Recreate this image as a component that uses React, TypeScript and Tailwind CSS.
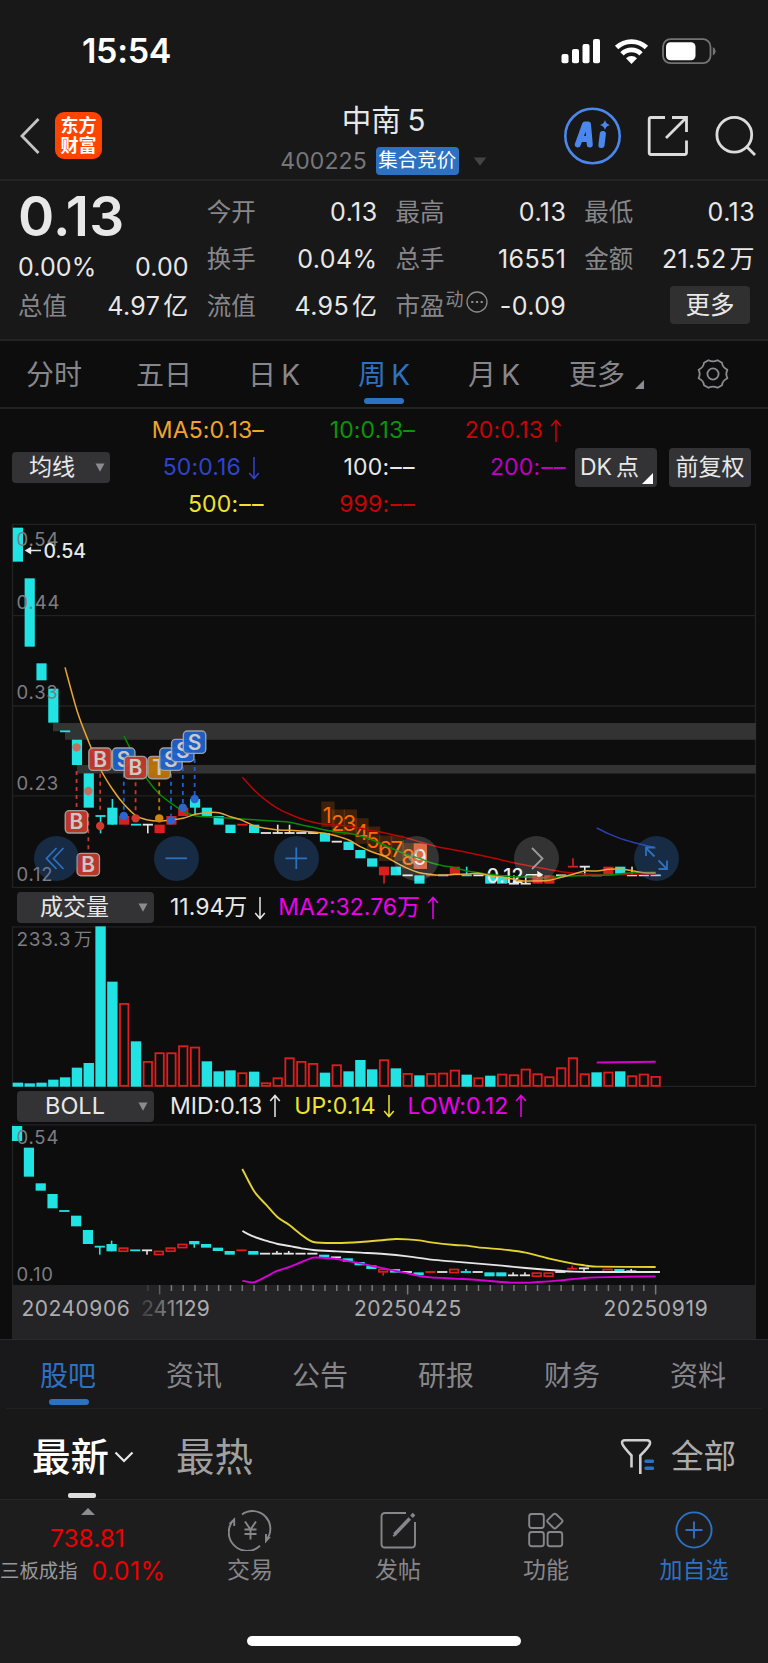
import React from "react";

type Kind = "c" | "r" | "w";
type Candle = [top: number, bottom: number, kind: Kind, wickTop?: number, wickBottom?: number];

const COLORS: Record<Kind, string> = { c: "#22e3e3", r: "#dc1e1e", w: "#e4e4e4" };
const STEP = 11.81;
const X0 = 17.9;
const cx = (i: number) => X0 + i * STEP;

/* Values are in thirds of a pixel, measured from the top of each panel. */
const PRICE: Candle[] = [
  [38, 140, "c"], [190, 395, "c"], [445, 496, "c"], [521, 623, "c"], [649, 649, "c"], [674, 750, "c"],
  [775, 878, "c"], [903, 903, "c", 903, 955], [878, 929, "c", 852, 929], [903, 929, "r"], [929, 929, "c"],
  [929, 929, "w", 929, 955], [929, 954, "r"], [903, 929, "r"], [878, 903, "r"], [852, 878, "c", 852, 903],
  [878, 903, "c"], [903, 929, "c"], [929, 954, "c"], [929, 929, "r"], [929, 954, "c"], [954, 954, "w"],
  [954, 954, "w", 929, 954], [954, 954, "w", 929, 954], [954, 954, "w"], [954, 954, "w"], [954, 980, "c"],
  [980, 980, "w"], [980, 1005, "c"], [1005, 1030, "c"], [1030, 1055, "c"], [1055, 1081, "r", 1055, 1106],
  [1055, 1081, "c"], [1081, 1081, "w"], [1081, 1106, "c"], [1081, 1081, "r"], [1081, 1081, "w"],
  [1055, 1081, "r"], [1081, 1081, "c", 1055, 1081], [1081, 1081, "w"], [1081, 1106, "c"], [1081, 1106, "c"],
  [1106, 1106, "w", 1081, 1106], [1106, 1106, "w", 1081, 1106], [1081, 1106, "r"], [1081, 1106, "r"],
  [1081, 1081, "w"], [1055, 1055, "r", 1030, 1055], [1055, 1055, "w", 1055, 1081], [1081, 1081, "w"],
  [1055, 1081, "r"], [1055, 1076, "c"], [1081, 1081, "w", 1055, 1081], [1081, 1081, "w"], [1081, 1081, "w"],
];

const BOLL: Candle[] = [
  [108, 153, "c"], [173, 260, "c"], [280, 302, "c"], [312, 355, "c"], [363, 363, "c"], [377, 409, "c"],
  [420, 462, "c"], [470, 470, "c", 470, 494], [462, 484, "c", 452, 484], [472, 486, "r"], [481, 481, "c"],
  [481, 481, "w", 481, 494], [482, 496, "r"], [472, 486, "r"], [461, 475, "r"], [453, 463, "c", 453, 473],
  [462, 473, "c"], [473, 483, "c"], [483, 494, "c"], [481, 481, "r"], [483, 494, "c"], [491, 491, "w"],
  [491, 491, "w", 483, 491], [491, 491, "w", 483, 491], [491, 491, "w"], [491, 491, "w"], [494, 503, "c"],
  [502, 502, "w"], [505, 515, "c"], [516, 526, "c"], [526, 537, "c"], [536, 548, "r", 548, 557],
  [537, 548, "c"], [546, 546, "w"], [547, 556, "c"], [546, 546, "r"], [546, 546, "w"], [536, 550, "r"],
  [546, 546, "c", 537, 546], [546, 546, "w"], [547, 559, "c"], [547, 559, "c"], [556, 556, "w", 547, 556],
  [556, 556, "w", 547, 556], [547, 561, "r"], [547, 561, "r"], [546, 546, "w"], [536, 536, "r", 527, 536],
  [535, 535, "w", 535, 547], [546, 546, "w"], [536, 549, "r"], [537, 546, "c"], [544, 544, "w", 537, 544],
  [546, 546, "w"], [546, 546, "w"],
];

const VOLUME: [number, Kind][] = [
  [593, "c"], [595, "c"], [593, "c"], [584, "c"], [577, "c"], [548, "c"], [534, "c"], [124, "c"], [290, "c"],
  [354, "r"], [469, "c"], [528, "r"], [502, "r"], [502, "r"], [481, "r"], [485, "r"], [529, "c"], [559, "c"],
  [556, "c"], [562, "r"], [560, "c"], [592, "r"], [577, "r"], [517, "r"], [528, "r"], [534, "r"], [563, "c"],
  [538, "r"], [559, "c"], [525, "c"], [553, "c"], [523, "r"], [550, "c"], [564, "r"], [571, "c"], [564, "r"],
  [563, "r"], [554, "r"], [569, "c"], [577, "r"], [572, "c"], [566, "r"], [568, "r"], [551, "r"], [565, "r"],
  [574, "r"], [547, "r"], [517, "r"], [565, "r"], [562, "c"], [560, "r"], [559, "c"], [571, "r"], [566, "r"],
  [573, "r"],
];

/* Smooth polyline through points given in thirds of a pixel. */
function curve(points: number[][], offset: number) {
  const p = points.map(([x, y]) => [x / 3, y / 3 + offset]);
  let d = `M${p[0][0]} ${p[0][1]}`;
  for (let i = 0; i < p.length - 1; i++) {
    const a = p[Math.max(0, i - 1)];
    const b = p[i];
    const c = p[i + 1];
    const e = p[Math.min(p.length - 1, i + 2)];
    const k = 7;
    d += `C${b[0] + (c[0] - a[0]) / k} ${b[1] + (c[1] - a[1]) / k} ${c[0] - (e[0] - b[0]) / k} ${c[1] - (e[1] - b[1]) / k} ${c[0]} ${c[1]}`;
  }
  return d;
}

const MA5 = [
  [195, 457], [232, 590], [266, 680], [301, 762], [337, 822], [372, 868], [408, 902], [440, 914], [479, 918],
  [514, 915], [549, 910], [585, 898], [620, 893], [656, 893], [691, 905], [727, 916], [762, 932], [798, 940],
  [833, 945], [868, 946], [940, 951], [975, 955], [1010, 963], [1046, 975], [1081, 995], [1117, 1011],
  [1152, 1023], [1187, 1042], [1223, 1060], [1258, 1073], [1293, 1078], [1329, 1081], [1364, 1078],
  [1400, 1077], [1435, 1075], [1470, 1082], [1506, 1087], [1541, 1093], [1577, 1098], [1612, 1098],
  [1648, 1096], [1683, 1087], [1719, 1078], [1754, 1068], [1790, 1068], [1825, 1063], [1860, 1062],
  [1896, 1067], [1931, 1073], [1967, 1074],
];
const MA10 = [
  [372, 663], [408, 735], [443, 795], [479, 838], [514, 865], [549, 888], [585, 902], [620, 905], [691, 910],
  [762, 914], [833, 919], [868, 922], [905, 930], [940, 937], [975, 945], [1010, 951], [1046, 955],
  [1081, 963], [1117, 975], [1152, 990], [1187, 1005], [1223, 1020], [1258, 1030], [1293, 1043],
  [1329, 1052], [1364, 1058], [1400, 1068], [1435, 1073], [1470, 1078], [1506, 1082], [1541, 1085],
  [1577, 1086], [1648, 1088], [1683, 1084], [1754, 1082], [1825, 1080], [1860, 1077], [1896, 1073], [1967, 1072],
];
const MA20 = [
  [727, 787], [762, 825], [798, 856], [833, 880], [868, 897], [905, 912], [940, 922], [975, 928], [1010, 930],
  [1046, 934], [1081, 940], [1117, 947], [1152, 953], [1212, 967], [1258, 980], [1312, 995], [1382, 1008],
  [1470, 1027], [1541, 1043], [1612, 1057], [1683, 1070], [1754, 1077], [1825, 1079], [1896, 1078], [1967, 1077],
];
const MA50 = [[1790, 939], [1825, 956], [1860, 970], [1896, 981], [1931, 990], [1967, 999]];
const UP = [
  [727, 237], [762, 303], [798, 344], [833, 382], [868, 405], [905, 435], [940, 456], [1010, 459],
  [1082, 456], [1152, 450], [1187, 447], [1223, 448], [1258, 451], [1293, 457], [1364, 465], [1400, 467],
  [1435, 472], [1506, 478], [1577, 488], [1648, 506], [1719, 521], [1754, 526], [1790, 530], [1967, 531],
];
const MID = [
  [727, 423], [762, 440], [798, 452], [833, 462], [868, 468], [905, 475], [940, 480], [1010, 484],
  [1082, 488], [1152, 492], [1223, 499], [1293, 509], [1364, 515], [1435, 521], [1506, 527], [1577, 534],
  [1648, 540], [1719, 545], [1790, 546], [1979, 546],
];
const LOW = [
  [727, 572], [762, 577], [798, 560], [833, 542], [868, 531], [905, 516], [940, 503], [975, 504],
  [1010, 507], [1046, 514], [1082, 520], [1117, 528], [1152, 535], [1187, 543], [1223, 550], [1258, 558],
  [1293, 562], [1364, 566], [1435, 570], [1506, 576], [1542, 578], [1577, 578], [1612, 576], [1682, 571],
  [1742, 565], [1790, 562], [1967, 559],
];

function Candles({ data, offset, hollow = false, dx = 0 }: { data: Candle[]; offset: number; hollow?: boolean; dx?: number }) {
  return (
    <g>
      {data.map(([t, b, k, wt, wb], i) => {
        const x = cx(i) + dx;
        const top = t / 3 + offset;
        const h = (b - t) / 3;
        const dash = h === 0;
        const color = COLORS[k];
        return (
          <g key={i}>
            {wt !== undefined && wb !== undefined && (
              <rect x={x - 0.8} y={wt / 3 + offset} width={1.6} height={(wb - wt) / 3} fill={color} />
            )}
            {dash ? (
              <rect x={x - 5.1} y={top - 0.9} width={10.2} height={1.8} fill={color} />
            ) : hollow && k === "r" ? (
              <rect x={x - 4.3} y={top + 0.8} width={8.6} height={h - 1.6} fill="none" stroke={color} strokeWidth={1.7} />
            ) : (
              <rect x={x - 5.1} y={top} width={10.2} height={h} fill={color} />
            )}
          </g>
        );
      })}
    </g>
  );
}

const SIGNALS: { i: number; y: number; label: string; color: string; dot: number; from: number; to: number }[] = [
  { i: 5, y: 920, label: "B", color: "#c63a2c", dot: 697, from: 768, to: 878 },
  { i: 6, y: 1048, label: "B", color: "#c63a2c", dot: 828, from: 895, to: 1006 },
  { i: 7, y: 732, label: "B", color: "#c63a2c", dot: 933, from: 776, to: 890 },
  { i: 9, y: 732, label: "S", color: "#1d62cc", dot: 903, from: 776, to: 890 },
  { i: 10, y: 757, label: "B", color: "#c63a2c", dot: 910, from: 802, to: 898 },
  { i: 12, y: 757, label: "T", color: "#c07608", dot: 910, from: 802, to: 898 },
  { i: 13, y: 732, label: "S", color: "#1d62cc", dot: 916, from: 776, to: 902 },
  { i: 14, y: 706, label: "S", color: "#1d62cc", dot: 878, from: 756, to: 864 },
  { i: 15, y: 681, label: "S", color: "#1d62cc", dot: 852, from: 732, to: 840 },
];

const COUNTS = [
  [982, 900], [1013, 924], [1049, 924], [1084, 950], [1119, 975], [1155, 1002], [1190, 1002], [1225, 1025],
];

function PriceChart() {
  const o = -8;
  return (
    <svg viewBox="0 0 768 365" className="block h-[365px] w-full" fontFamily="Inter, 'Noto Sans CJK SC', sans-serif">
      <g fill="none" stroke="#222224" strokeWidth="1.3">
        <rect x="12.5" y="1.4" width="743" height="363" />
        <path d="M12 92.7H756M12 183H756M12 272.8H756" />
      </g>
      <path d="M53 200H756V216.7H65V208.3H53ZM77 242H756V250.5H77Z" fill="#333334" />
      <Candles data={PRICE} offset={o} />
      {COUNTS.map(([x, y], i) => (
        <g key={i}>
          <rect x={x / 3 - 6} y={y / 3 + o - 13.5} width="13.3" height="25.6" fill="#ff7300" fillOpacity="0.2" />
          <text x={x / 3} y={y / 3 + o + 8} fill="#fa6c06" fontSize="22" textAnchor="middle">
            {i + 1}
          </text>
        </g>
      ))}
      <rect x="413.7" y="320.3" width="13.3" height="25.7" fill="#f35a24" fillOpacity="0.88" />
      <text x="420.2" y="341.8" fill="#f1e9e6" fontSize="22" textAnchor="middle">9</text>
      <text x="486.5" y="360" fill="#ececec" fontSize="19.5" fontWeight="500" textLength="37">0.12</text>
      <path d="M526 351.7H539M538 349L542 351.7L538 354.4Z" stroke="#ececec" strokeWidth="1.4" fill="#ececec" />
      <g fill="none" strokeWidth="1.5">
        <path d={curve(MA20, o)} stroke="#b90505" />
        <path d={curve(MA10, o)} stroke="#058a05" />
        <path d={curve(MA5, o)} stroke="#e8a634" />
        <path d={curve(MA50, o)} stroke="#2d3eb4" />
      </g>
      {SIGNALS.map((s) => (
        <g key={s.i}>
          <path d={`M${cx(s.i) - 0.4} ${s.from / 3 + o}V${s.to / 3 + o}`} stroke={s.color} strokeWidth="1.8" strokeDasharray="4 4" />
          <circle cx={cx(s.i) - 0.4} cy={s.dot / 3 + o} r="4.2" fill={s.label === "S" ? "#2b66d0" : s.label === "T" ? "#d58410" : s.i < 7 ? "#c46e5e" : "#d03b2d"} />
        </g>
      ))}
      {SIGNALS.map((s) => (
        <g key={s.i} opacity="0.94">
          <rect x={cx(s.i) - 11.7} y={s.y / 3 + o - 11} width="22.4" height="22.4" rx="4" fill={s.color} stroke="#aaa6a6" strokeWidth="1.4" />
          <text x={cx(s.i) - 0.5} y={s.y / 3 + o + 7.5} fill="#d6d3d3" fontSize="21" fontWeight="600" textAnchor="middle">
            {s.label}
          </text>
        </g>
      ))}
      <g fill="#7d7d82" fontSize="18.5" letterSpacing="0.8">
        <text x="16.5" y="22.6">0.54</text>
        <text x="16.5" y="85.5">0.44</text>
        <text x="16.5" y="176.2">0.33</text>
        <text x="16.5" y="266.5">0.23</text>
        <text x="16.5" y="357.5">0.12</text>
      </g>
      <path d="M41 27.5H27M30.5 24.8L26 27.5L30.5 30.2Z" stroke="#e8e8e8" strokeWidth="1.4" fill="#e8e8e8" />
      <text x="43.5" y="34.5" fill="#e8e8e8" fontSize="19.5" fontWeight="500">0.54</text>
    </svg>
  );
}

function ChartControls() {
  const base = "flex size-[45px] items-center justify-center rounded-full";
  const blue = `${base} bg-[#2d72c2]/30 text-[#2c71c0]`;
  const gray = `${base} bg-white/[0.16] text-[#9b9b9d]`;
  const icon = "size-[45px]";
  return (
    <div className="absolute left-[34px] top-[313px] flex gap-[75px]">
      <button className={blue}>
        <svg viewBox="0 0 45 45" className={icon} fill="none" stroke="currentColor" strokeWidth="1.8">
          <path d="M22.5 12L12.5 22.5L22.5 33M29.5 12L19.5 22.5L29.5 33" />
        </svg>
      </button>
      <button className={blue}>
        <svg viewBox="0 0 45 45" className={icon} fill="none" stroke="currentColor" strokeWidth="1.8">
          <path d="M11.5 22.3H33" />
        </svg>
      </button>
      <button className={blue}>
        <svg viewBox="0 0 45 45" className={icon} fill="none" stroke="currentColor" strokeWidth="1.8">
          <path d="M11.5 22.3H33M22.3 11.5V33" />
        </svg>
      </button>
      <button className={gray}>
        <svg viewBox="0 0 45 45" className={icon} fill="none" stroke="currentColor" strokeWidth="1.8">
          <path d="M25.5 12.5L15.5 22.5L25.5 32.5" opacity="0.7" />
        </svg>
      </button>
      <button className={gray}>
        <svg viewBox="0 0 45 45" className={icon} fill="none" stroke="currentColor" strokeWidth="1.8">
          <path d="M18 12L28.5 22.5L18 33" />
        </svg>
      </button>
      <button className={blue}>
        <svg viewBox="0 0 45 45" className={icon} fill="none" stroke="currentColor" strokeWidth="1.8">
          <path d="M20.5 20.5L12 12M12 20V11.5H20.5M24.5 24.5L33 33M33 24.5V33H24.5" />
        </svg>
      </button>
    </div>
  );
}

function VolumeChart() {
  const base = 160.7;
  return (
    <svg viewBox="0 0 768 161" className="block h-[161px] w-full" fontFamily="Inter, 'Noto Sans CJK SC', sans-serif">
      <rect x="12.5" y="0.9" width="743" height="159.6" fill="none" stroke="#222224" strokeWidth="1.3" />
      {VOLUME.map(([z, k], i) => {
        const top = z / 3 - 41;
        const x = cx(i);
        return k === "c" ? (
          <rect key={i} x={x - 5.2} y={top} width={10.4} height={base - top} fill="#22e3e3" />
        ) : (
          <rect key={i} x={x - 4.2} y={top + 0.9} width={8.4} height={Math.max(1.5, base - top - 1.8)} fill="none" stroke="#dc1e1e" strokeWidth="1.8" />
        );
      })}
      <path d="M596.7 136.4L655.7 135.7" stroke="#d400d4" strokeWidth="2" />
      <text x="16.5" y="19.5" fill="#7d7d82" fontSize="19" letterSpacing="0.65">
        233.3<tspan dx="3" fontSize="18">万</tspan>
      </text>
    </svg>
  );
}

function BollChart() {
  const o = -34;
  return (
    <svg viewBox="0 0 768 215" className="block h-[215px] w-full" fontFamily="Inter, sans-serif">
      <defs>
        <linearGradient id="fade" x1="138" x2="185" y1="0" y2="0" gradientUnits="userSpaceOnUse">
          <stop offset="0" stopColor="#adadb0" stopOpacity="0.1" />
          <stop offset="1" stopColor="#adadb0" />
        </linearGradient>
      </defs>
      <rect x="12.5" y="0.9" width="743" height="161" fill="none" stroke="#222224" strokeWidth="1.3" />
      <rect x="12" y="161" width="744" height="54" fill="#242426" />
      <Candles data={BOLL} offset={o} hollow dx={-0.8} />
      <g fill="none" strokeWidth="1.9">
        <path d={curve(LOW, o)} stroke="#d800d8" />
        <path d={curve(MID, o)} stroke="#e6e6e6" />
        <path d={curve(UP, o)} stroke="#e3d234" />
      </g>
      <g fill="#7d7d82" fontSize="18.5" letterSpacing="0.8">
        <text x="16.5" y="20.4">0.54</text>
        <text x="16.5" y="156.5">0.10</text>
      </g>
      <g stroke="#77777a" strokeWidth="1.5">
        {Array.from({ length: 44 }, (_, n) => n + 11).map((i) => (
          <path key={i} d={`M${cx(i)} 161V${i === 12 || i === 33 || i === 54 ? 170.5 : 167}`} opacity={i === 11 ? 0.3 : i === 12 ? 0.7 : 1} />
        ))}
      </g>
      <g fill="#adadb0" fontSize="21" letterSpacing="0.35">
        <text x="21.5" y="192" textLength="108.5">20240906</text>
        <text x="141" y="192" fill="url(#fade)" textLength="69">241129</text>
        <text x="354" y="192" textLength="107.5">20250425</text>
        <text x="603.5" y="192" textLength="104.5">20250919</text>
      </g>
    </svg>
  );
}

function Cell({ label, value, className = "" }: { label: React.ReactNode; value: React.ReactNode; className?: string }) {
  return (
    <div className={`flex h-[47px] items-center justify-between ${className}`}>
      <span className="-ml-px text-[24.5px] text-[#87878b]">{label}</span>
      <span className="text-[25px] tracking-[0.4px] text-[#e8e8e8]">{value}</span>
    </div>
  );
}

const Caret = ({ className = "w-[10px]" }: { className?: string }) => (
  <svg viewBox="0 0 10 9" preserveAspectRatio="none" className={`h-[9px] ${className}`} fill="currentColor">
    <path d="M0.5 0.5H9.5L5 8.7Z" />
  </svg>
);

const Arrow = ({ down = false }: { down?: boolean }) => (
  <svg viewBox="0 0 12 24" className={`ml-[7px] inline-block h-[24px] w-[12px] shrink-0 ${down ? "rotate-180" : ""}`} fill="none" stroke="currentColor" strokeWidth="1.5">
    <path d="M6 23V2M1.2 7L6 1.5L10.8 7" />
  </svg>
);

const Dashes = () => <span className="-mr-[1px] ml-[1px] tracking-[1.4px]">––</span>;

const TABS = ["分时", "五日", "日 K", "周 K", "月 K"];
const INFO_TABS = ["股吧", "资讯", "公告", "研报", "财务", "资料"];

export default function App() {
  return (
    <div className="flex h-[1663px] w-[768px] flex-col overflow-hidden whitespace-nowrap bg-[#0d0d0d] font-[Inter,'Noto_Sans_CJK_SC',sans-serif] leading-none text-[#e8e8e8]">
      {/* Status bar */}
      <div className="flex h-[83px] items-center justify-between bg-[#181818] pl-[82px] pr-[52px] pt-[19px]">
        <span className="text-[34px] font-semibold tracking-[-0.3px] text-white">15:54</span>
        <svg viewBox="0 0 156 28" className="h-[28px] w-[156px]">
          <g fill="#fff">
            <rect x="1.5" y="17" width="7" height="9.3" rx="2" />
            <rect x="12" y="12" width="7" height="14.3" rx="2" />
            <rect x="22.5" y="7" width="7" height="19.3" rx="2" />
            <rect x="33" y="2" width="7" height="24.3" rx="2" />
          </g>
          <g fill="none" stroke="#fff" strokeWidth="4.8">
            <path d="M56.6 10.6A21.5 21.5 0 0 1 86.4 10.6" />
            <path d="M62 16.9A13.4 13.4 0 0 1 81 16.9" />
          </g>
          <path d="M66 21.3A8 8 0 0 1 77 21.3L71.5 27Z" fill="#fff" />
          <rect x="103" y="2.2" width="47.5" height="24" rx="7.5" fill="none" stroke="#747474" strokeWidth="1.8" />
          <rect x="106" y="5.2" width="29.5" height="18" rx="4.5" fill="#fff" />
          <path d="M152.8 10V18.5Q155.6 17 155.6 14.2Q155.6 11.5 152.8 10Z" fill="#747474" />
        </svg>
      </div>

      {/* Header */}
      <header className="flex h-[98px] items-start justify-between border-b-[2px] border-[#242426] bg-[#181818] pl-[19px] pr-[10px]">
        <div className="flex w-[220px] items-center pt-[29px]">
          <svg viewBox="0 0 22 38" className="h-[38px] w-[22px]" fill="none" stroke="#c4c4c4" strokeWidth="2.8">
            <path d="M19.5 2L3 19L19.5 36" />
          </svg>
          <div className="ml-[14px] flex size-[47px] flex-col items-center justify-center rounded-[9px] bg-[#ff4400] text-[18px] font-bold leading-[20px] text-white">
            <span>东方</span>
            <span>财富</span>
          </div>
        </div>
        <div className="flex flex-col items-center pt-[21px]">
          <h1 className="text-[29.5px] font-normal leading-[32px] text-[#e8e8e8] [word-spacing:-1.5px]">中南 5</h1>
          <div className="mt-[11px] flex items-center">
            <span className="text-[23px] tracking-[0.1px] text-[#77777b]">400225</span>
            <span className="ml-[9px] flex h-[28px] w-[83px] items-center justify-center rounded-[4px] bg-[#2d72c2] text-[19.5px] text-white">集合竞价</span>
            <Caret className="ml-[14px] mt-[1px] w-[14px] text-[#444448]" />
          </div>
        </div>
        <div className="flex w-[230px] justify-end pt-[24px]">
          <svg viewBox="0 0 198 60" className="h-[60px] w-[198px]" fill="none">
            <circle cx="32.5" cy="29" r="27.2" stroke="#4b87ec" strokeWidth="2.6" />
            <g stroke="#4b87ec" strokeLinecap="round" strokeLinejoin="round">
              <path d="M17.8 37.5L25 17.5H28L29.8 37.5M22 32H28.5" strokeWidth="6" />
              <path d="M42.8 27L41.5 38" strokeWidth="6.2" />
            </g>
            <path d="M45 13Q45.8 17 50 18Q45.8 19 45 23Q44 19 40 18Q44 17 45 13Z" fill="#4b87ec" />
            <g stroke="#dcdcdc" strokeWidth="2.8">
              <path d="M105 10.5H91Q89.2 10.5 89.2 12.5V45.5Q89.2 47.5 91 47.5H124.5Q126.5 47.5 126.5 45.5V33.5" />
              <path d="M112 10.5H126.5V25M126 11L106 31" />
              <circle cx="174.3" cy="27.7" r="17.4" />
              <path d="M187 40L195 48" />
            </g>
          </svg>
        </div>
      </header>

      {/* Quote summary */}
      <section className="flex h-[160px] border-b-[2px] border-[#242426] bg-[#181818] pl-[19px] pr-[13px] pt-[8px]">
        <div className="w-[170px]">
          <div className="-ml-[1px] flex h-[54px] items-center text-[55px] font-semibold tracking-[0.2px]">0.13</div>
          <div className="-ml-px flex h-[37px] items-end justify-between text-[25px] tracking-[0.1px]">
            <span>0.00%</span>
            <span>0.00</span>
          </div>
          <Cell className="mt-[3px]" label="总值" value={<>4.97<span className="ml-[3px]">亿</span></>} />
        </div>
        <div className="ml-[19px] w-[170px]">
          <Cell label="今开" value="0.13" />
          <Cell label="换手" value="0.04%" />
          <Cell label="流值" value={<>4.95<span className="ml-[3px]">亿</span></>} />
        </div>
        <div className="ml-[19px] w-[170px]">
          <Cell label="最高" value="0.13" />
          <Cell label="总手" value="16551" />
          <Cell
            label={
              <span className="flex items-center">
                市盈
                <span className="ml-[1px] mt-[-14px] text-[18px]">动</span>
                <svg viewBox="0 0 22 22" className="ml-[2px] mt-[-9px] size-[22px]" fill="none" stroke="#8c8c90" strokeWidth="1.3">
                  <circle cx="11" cy="11" r="10" />
                  <path d="M5.2 11H7.4M9.9 11H12.1M14.6 11H16.8" strokeWidth="2.2" />
                </svg>
              </span>
            }
            value="-0.09"
          />
        </div>
        <div className="ml-[19px] w-[170px]">
          <Cell label="最低" value="0.13" />
          <Cell label="金额" value={<>21.52<span className="ml-[3px]">万</span></>} />
          <div className="flex h-[44px] items-center justify-end pr-[5px]">
            <button className="flex h-[38px] w-[80px] items-center justify-center rounded-[4px] bg-[#303031] text-[24.5px]">更多</button>
          </div>
        </div>
      </section>

      {/* Period tabs */}
      <nav className="-ml-px flex h-[68px] items-start border-b-[2px] border-[#222224] text-[28px] text-[#87878b]">
        {TABS.map((t, i) => (
          <div key={t} className={`flex w-[110px] flex-col items-center [word-spacing:-2.5px] ${i === 3 ? "text-[#2d72c2]" : ""}`}>
            <span className="pt-[20px] leading-[28px]">{t}</span>
            {i === 3 && <span className="mt-[9px] h-[6px] w-[40px] rounded-[3px] bg-[#2d72c2]" />}
          </div>
        ))}
        <div className="ml-[20px] flex items-end pt-[20px] leading-[28px]">
          更多
          <svg viewBox="0 0 9 9" className="mb-0 ml-[10px] size-[9px]" fill="#8c8c90">
            <path d="M9 0V9H0Z" />
          </svg>
        </div>
        <svg viewBox="0 0 32 32" className="ml-[53px] mt-[17px] size-[32px]" fill="none" stroke="#8c8c90" strokeWidth="1.8">
          <path d="M11.5 2.2Q16 4.6 20.5 2.2L25 4.8Q25.4 9.6 30.4 11.8Q28.2 16 30.4 20.2Q25.4 22.4 25 27.2L20.5 29.8Q16 27.4 11.5 29.8L7 27.2Q6.6 22.4 1.6 20.2Q3.8 16 1.6 11.8Q6.6 9.6 7 4.8Z" strokeLinejoin="round" />
          <circle cx="16" cy="16" r="5.6" />
        </svg>
      </nav>

      {/* Moving averages */}
      <section className="flex h-[114px] items-center pl-[12px] pt-[3px] text-[23px]">
        <button className="flex h-[31px] w-[98px] items-center rounded-[4px] bg-[#333335] pl-[17px] text-[23px]">
          均线
          <Caret className="ml-[20px] w-[10px] text-[#8c8c90]" />
        </button>
        <div className="grid w-[456px] grid-cols-[154px_151px_151px] text-right leading-[37px] tracking-[0.15px]">
          <span className="text-[#efa52d]">MA5:0.13–</span>
          <span className="text-[#0a960a]">10:0.13–</span>
          <span className="flex items-center justify-end pr-[4px] text-[#c80404]">20:0.13<Arrow /></span>
          <span className="flex items-center justify-end pr-[4px] text-[#2f43cf]">50:0.16<Arrow down /></span>
          <span>100:<Dashes /></span>
          <span className="text-[#c000c0]">200:<Dashes /></span>
          <span className="text-[#efe32f]">500:<Dashes /></span>
          <span className="text-[#c80404]">999:<Dashes /></span>
        </div>
        <button className="ml-[9px] flex h-[39px] w-[82px] items-end rounded-[4px] bg-[#333335] pb-[8px] pl-[5px] text-[23px]">
          DK<span className="ml-[4px]">点</span>
          <svg viewBox="0 0 11 11" className="-mb-[5px] ml-[3px] size-[11px]" fill="#fff">
            <path d="M11 0V11H0Z" />
          </svg>
        </button>
        <button className="ml-[12px] flex h-[39px] w-[82px] items-center justify-center rounded-[4px] bg-[#333335] text-[23px]">前复权</button>
      </section>

      {/* Weekly candles */}
      <section className="relative h-[366px]">
        <PriceChart />
        <ChartControls />
      </section>

      {/* Volume */}
      <div className="flex h-[37px] items-center pl-[17px] text-[23px]">
        <button className="flex h-[31px] w-[137px] items-center justify-between rounded-[4px] bg-[#333335] pl-[23px] pr-[6px] text-[23px]">
          成交量
          <Caret className="w-[10px] text-[#8c8c90]" />
        </button>
        <span className="ml-[16px] flex items-center">11.94万<Arrow down /></span>
        <span className="ml-[12px] flex items-center text-[#ee00ee]">MA2:32.76万<Arrow /></span>
      </div>
      <VolumeChart />

      {/* Bollinger bands */}
      <div className="flex h-[37px] items-center pl-[17px] pt-px text-[23px]">
        <button className="flex h-[31px] w-[137px] items-center justify-between rounded-[4px] bg-[#333335] pl-[28px] pr-[6px] text-[23.5px]">
          BOLL
          <Caret className="w-[10px] text-[#8c8c90]" />
        </button>
        <span className="ml-[16px] flex items-center">MID:0.13<Arrow /></span>
        <span className="ml-[13px] flex items-center text-[#efe32f]">UP:0.14<Arrow down /></span>
        <span className="ml-[13px] flex items-center tracking-[0.1px] text-[#ee00ee]">LOW:0.12<Arrow /></span>
      </div>
      <BollChart />

      {/* Information tabs */}
      <nav className="flex h-[69px] border-t border-[#2a2a2c] bg-[#19191b] px-[5px] text-[28px] text-[#87878b]">
        {INFO_TABS.map((t, i) => (
          <div key={t} className={`flex w-[126px] flex-col items-center ${i === 0 ? "text-[#2d72c2]" : ""}`}>
            <span className="pt-[22px] leading-[28px]">{t}</span>
            {i === 0 && <span className="ml-[2px] mt-[9px] h-[6px] w-[40px] rounded-[3px] bg-[#2d72c2]" />}
          </div>
        ))}
      </nav>

      {/* Post filters */}
      <div className="bg-[#181818] px-[6px]">
        <div className="flex h-[91px] items-start border-t border-[#222224] pl-[26px] pr-[26px]">
          <div className="flex flex-col">
            <div className="flex items-center pt-[29px]">
              <span className="text-[38.5px] font-medium leading-[38px] text-white">最新</span>
              <svg viewBox="0 0 20 12" className="ml-[5px] h-[12px] w-[20px]" fill="none" stroke="#e8e8e8" strokeWidth="2.2">
                <path d="M1.5 1.5L10 10L18.5 1.5" />
              </svg>
            </div>
            <span className="ml-[36px] mt-[17px] h-[5px] w-[28px] rounded-[2px] bg-[#dedede]" />
          </div>
          <span className="ml-[42px] pt-[29px] text-[38.5px] leading-[38px] text-[#a0a0a0]">最热</span>
          <div className="ml-auto flex items-center pt-[29px]">
            <svg viewBox="0 0 34 38" className="h-[38px] w-[34px]" fill="none">
              <path d="M20.3 36V17.5Q29.5 8.5 30 5.5Q30.4 2.2 27 2.2H5Q1.5 2.2 2.2 5.5Q3 8.5 11.5 17.5V29.5" stroke="#d0d0d0" strokeWidth="2.6" />
              <path d="M26 23.3H32.5M26 30.2H32.5" stroke="#2d72c2" strokeWidth="3.4" strokeLinecap="round" />
            </svg>
            <span className="ml-[17px] text-[32.5px] leading-[38px] text-[#acacac]">全部</span>
          </div>
        </div>
      </div>

      {/* Bottom bar */}
      <footer className="flex grow flex-col border-t border-[#262628] bg-[#1d1d1d]">
        <div className="flex h-[110px]">
          <div className="w-[176px] shrink-0">
            <div className="flex justify-center pt-[8px]">
              <svg viewBox="0 0 14 7" className="h-[7px] w-[14px]" fill="#8c8c90">
                <path d="M7 0L14 7H0Z" />
              </svg>
            </div>
            <div className="mt-[11px] pl-[50px] text-[24.5px] leading-[24px] text-[#ee0000]">738.81</div>
            <div className="mt-[8px] flex items-center leading-[26px]">
              <span className="text-[19.4px] text-[#98989c]">三板成指</span>
              <span className="ml-[14px] text-[25px] tracking-[0.3px] text-[#ee0000]">0.01%</span>
            </div>
          </div>
          {[
            {
              label: "交易",
              icon: (
                <>
                  <path d="M14 5.5A17.8 17.8 0 0 1 38 31.5M32 36.8A17.8 17.8 0 0 1 6.5 10M1.5 15L6.2 10.5V17M42 27.5L38 32V25" />
                  <path d="M17 12.5L22.5 20.5L28 12.5M22.5 20.5V30.5M16.5 20.5H28.5M16.5 25H28.5" />
                </>
              ),
            },
            {
              label: "发帖",
              icon: (
                <>
                  <path d="M30 4H9Q5.5 4 5.5 7.5V35Q5.5 38.5 9 38.5H35.5Q39 38.5 39 35V13" />
                  <path d="M18.5 25.5L33.8 9.5M35.5 7.7L38 5" strokeWidth="3.6" />
                  <path d="M17.2 27.2L20 25" strokeWidth="2" />
                </>
              ),
            },
            {
              label: "功能",
              icon: (
                <>
                  <rect x="5.2" y="5" width="14.6" height="14" rx="2.5" />
                  <rect x="5.2" y="23" width="14.6" height="14.3" rx="2.5" />
                  <rect x="23.6" y="23" width="14.6" height="14.3" rx="2.5" />
                  <path d="M29.4 5.3Q30.8 4 32.2 5.3L38 10.8Q39 12 38 13.2L32.2 18.8Q30.8 20 29.4 18.8L23.7 13.2Q22.7 12 23.7 10.8Z" />
                </>
              ),
            },
            {
              label: "加自选",
              icon: (
                <>
                  <circle cx="22" cy="21" r="17.6" />
                  <path d="M13.5 21H30.5M22 12.5V29.5" />
                </>
              ),
            },
          ].map((item, i) => (
            <button key={item.label} className={`flex w-[148px] shrink-0 flex-col items-center text-[23px] ${i === 3 ? "text-[#2d72c2]" : "text-[#87878b]"}`}>
              <svg viewBox="0 0 44 42" className="mt-[9px] h-[42px] w-[44px]" fill="none" stroke="currentColor" strokeWidth="1.9">
                {item.icon}
              </svg>
              <span className="mt-[7px] leading-[24px]">{item.label}</span>
            </button>
          ))}
        </div>
        <div className="mx-auto mt-[26px] h-[10px] w-[274px] rounded-full bg-white" />
      </footer>
    </div>
  );
}
